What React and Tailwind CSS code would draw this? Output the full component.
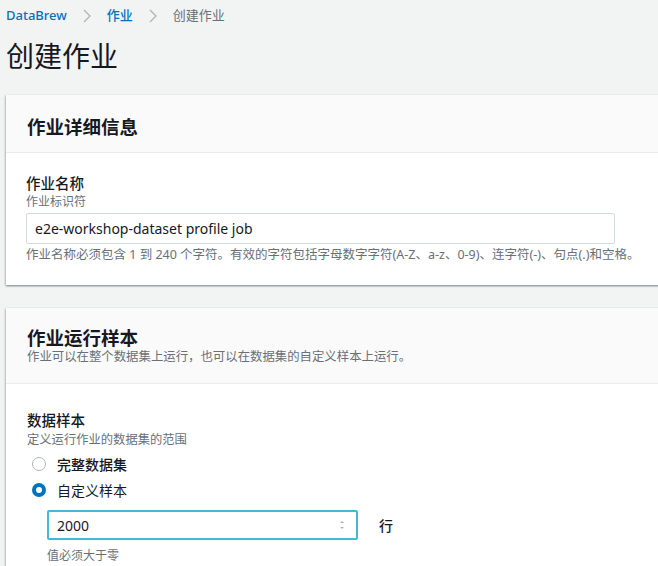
import React from "react";

const font = { fontFamily: '"Noto Sans", "Noto Sans CJK SC", sans-serif' };

function Chevron() {
  return (
    <svg width="10" height="16" viewBox="0 0 10 16" className="mx-[9px]">
      <path d="M2 2 L8 8 L2 14" fill="none" stroke="#aab7b8" strokeWidth="1.3" />
    </svg>
  );
}

const cardShadow =
  "shadow-[0_1px_2px_rgba(0,28,36,0.3),1px_1px_2px_rgba(0,28,36,0.15),-1px_1px_2px_rgba(0,28,36,0.15)]";

export default function App() {
  return (
    <div
      className="w-[658px] h-[566px] overflow-hidden bg-[#f2f3f3] text-[#16191f] font-['Noto_Sans','Noto_Sans_CJK_SC',sans-serif]"
      style={font}
    >
      <div className="pl-[6px]">
        {/* breadcrumb */}
        <div className="flex items-center h-[16px] mt-[8px] text-[13px]">
          <span className="text-[#0073bb] font-medium">DataBrew</span>
          <span className="mx-[6px]"><Chevron /></span>
          <span className="text-[#0073bb] font-medium">作业</span>
          <span className="mx-[6px]"><Chevron /></span>
          <span className="text-[#687078]">创建作业</span>
        </div>
        {/* title */}
        <h1 className="mt-[14px] text-[28px] leading-[36px] font-normal text-[#16191f]">创建作业</h1>

        {/* card 1 */}
        <div className={"mt-[21px] w-[700px] bg-white " + cardShadow}>
          <div className="h-[58px] bg-[#fafafa] border-b border-[#eaeded] px-[20px] pt-[20px]">
            <h2 className="text-[18.5px] font-bold leading-[24px] pl-[1px]">作业详细信息</h2>
          </div>
          <div className="px-[20px] pt-[21px] pb-[22px]">
            <div className="text-[14.5px] font-medium leading-[18px]">作业名称</div>
            <div className="text-[12px] text-[#687078] leading-[16px] mt-[2px]">作业标识符</div>
            <div className="mt-[3px] w-[589px] h-[31px] border border-[#d5dbdb] rounded-[2px] flex items-center px-[8px] text-[14px]">
              e2e-workshop-dataset profile job
            </div>
            <div className="mt-[3px] text-[12.5px] text-[#687078] leading-[16px] whitespace-nowrap">
              作业名称必须包含 1 到 240 个字符。有效的字符包括字母数字字符(A-Z、a-z、0-9)、连字符(-)、句点(.)和空格。
            </div>
          </div>
        </div>

        {/* card 2 */}
        <div className={"mt-[23px] w-[700px] bg-white " + cardShadow}>
          <div className="h-[76px] bg-[#fafafa] border-b border-[#eaeded] px-[20px] pt-[21px]">
            <h2 className="text-[18.5px] font-bold leading-[18px] pl-[1px]">作业运行样本</h2>
            <div className="mt-[3px] text-[12.4px] text-[#687078] leading-[13px] pl-[1px] whitespace-nowrap">
              作业可以在整个数据集上运行，也可以在数据集的自定义样本上运行。
            </div>
          </div>
          <div className="px-[20px] pt-[27px] pb-[20px]">
            <div className="text-[14.5px] font-medium leading-[18px] pl-[1px]">数据样本</div>
            <div className="mt-[3px] text-[12.3px] text-[#687078] leading-[16px] pl-[1px]">定义运行作业的数据集的范围</div>
            <div className="mt-[6px] flex items-center h-[20px]">
              <span className="w-[14px] h-[14px] rounded-full border border-[#aab7b8] bg-white ml-[6px]" />
              <span className="ml-[11px] text-[14px] font-medium">完整数据集</span>
            </div>
            <div className="mt-[6px] flex items-center h-[20px]">
              <span className="w-[14px] h-[14px] rounded-full border-[4px] border-[#0073bb] bg-white ml-[6px]" />
              <span className="ml-[11px] text-[14px]">自定义样本</span>
            </div>
            <div className="mt-[10px] ml-[21px] flex items-center">
              <div className="w-[311px] h-[30px] border-2 border-[#44b9d6] rounded-[2px] flex items-center px-[8px] text-[14px]">
                <span className="flex-1">2000</span>
                <svg width="6" height="12" viewBox="0 0 6 12" className="mr-[3px]">
                  <path d="M1 4 L3 2 L5 4 Z" fill="#aab7b8" />
                  <path d="M1 8 L3 10 L5 8 Z" fill="#aab7b8" />
                </svg>
              </div>
              <span className="ml-[21px] text-[14px] font-medium">行</span>
            </div>
            <div className="mt-[8px] ml-[21px] text-[12px] leading-[16px] text-[#687078]">值必须大于零</div>
          </div>
        </div>
      </div>
    </div>
  );
}
